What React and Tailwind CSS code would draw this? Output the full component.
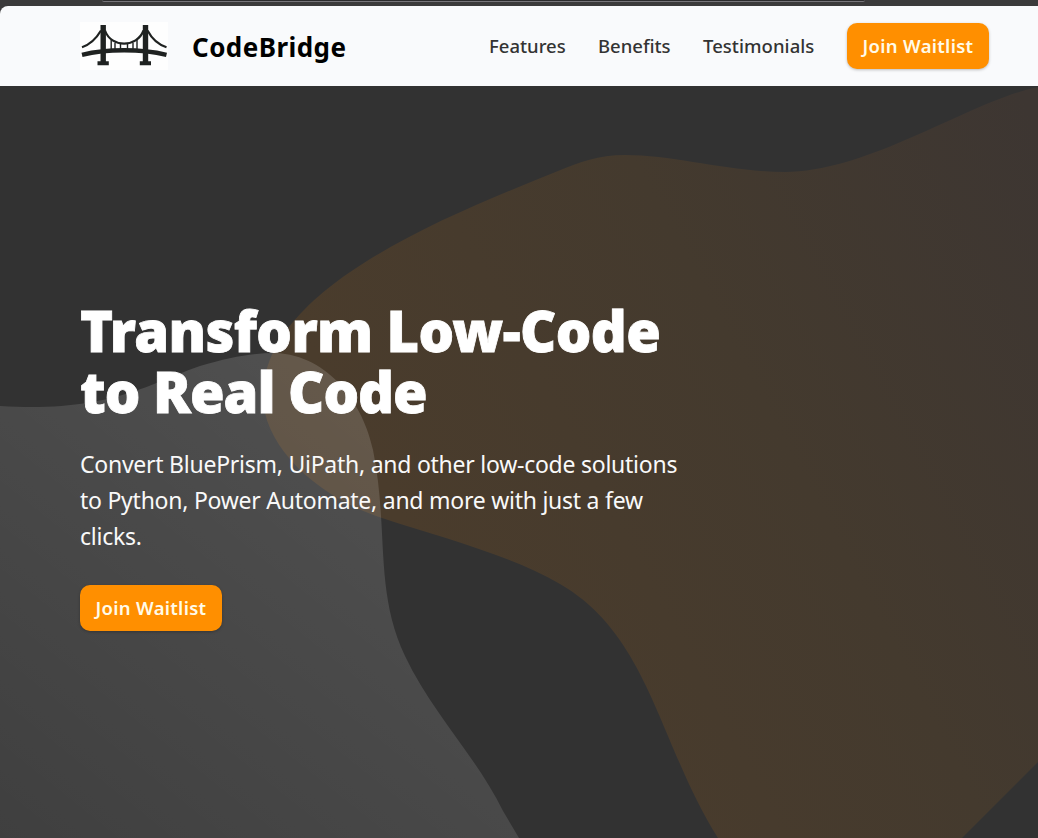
import React from "react";

function BridgeLogo() {
  return (
    <div className="h-12 w-[88px] bg-[#fefefe]">
      <svg viewBox="0 0 88 48" className="h-full w-full" fill="none" stroke="#1f2221">
        <path d="M2 32.800C27 26.800 61 26.800 86.500 32.800" strokeWidth="4.400" />
        <path d="M2 25.200C10 22.500 16 17 21 8.500M25 8.500C31 26 57 26 63.500 8.500M67.500 8.500C72 17 78 22.500 86.500 25.200" strokeWidth="2.200" />
        <path d="M31.200 18V27M35 21V27M40.500 22V27M47.500 22V27M53 21V27M57 18V27" strokeWidth="1.400" />
        <path d="M23.200 3V42M65.500 3V42" strokeWidth="5.400" />
        <path d="M17.500 41.300H28.800M59.800 41.300H71" strokeWidth="4" strokeLinejoin="round" />
      </svg>
    </div>
  );
}

function WaitlistButton() {
  return (
    <button className="flex h-[46px] w-[142px] shrink-0 items-center justify-center rounded-[10px] bg-[#ff8f00] shadow-[0_1px_3px_rgba(0,0,0,0.25)]">
      <span className="whitespace-nowrap pt-px text-[18.5px] font-semibold leading-none tracking-[0.3px] text-[#fffbe9]">
        Join Waitlist
      </span>
    </button>
  );
}

function Blobs() {
  return (
    <svg viewBox="0 86 1038 752" className="absolute inset-0 h-full w-full" preserveAspectRatio="none">
      <defs>
        <linearGradient id="amber" gradientUnits="userSpaceOnUse" x1="380" y1="480" x2="1040" y2="130">
          <stop offset="0" stopColor="#4a3c2c" />
          <stop offset="0.5" stopColor="#443a2e" />
          <stop offset="1" stopColor="#3d3632" />
        </linearGradient>
        <linearGradient id="smoke" gradientUnits="userSpaceOnUse" x1="350" y1="400" x2="0" y2="838">
          <stop offset="0" stopColor="#fff" stopOpacity="0.145" />
          <stop offset="1" stopColor="#fff" stopOpacity="0.065" />
        </linearGradient>
      </defs>
      <path
        fill="url(#amber)"
        d="M1038 87C970 101 870 172 785 172C730 172 675 155 625 155C598 155 580 162 558 171C450 215 263 287 263 396C263 445 315 496 382 518C443 538 510 555 560 584C650 636 659 745 718 838H962L1038 762Z"
      />
      <path
        fill="url(#smoke)"
        d="M0 406C110 413 150 383 200 366C230 357 252 353 275 353C330 355 364 406 373 450C389 530 374 590 405 656C432 713 476 756 503 811L519 838H0Z"
      />
    </svg>
  );
}

export default function App() {
  return (
    <div className="flex h-[838px] w-full flex-col overflow-hidden bg-[#323232] font-['Noto_Sans','Open_Sans',sans-serif]">
      <div className="h-[6px] shrink-0 bg-[#3b3a3b]">
        <div className="ml-[102px] h-[2px] w-[763px] rounded-b-[6px] border-b border-[#77757a] bg-[#2c2b2d]" />
      </div>
      <div className="shrink-0 bg-[#3b3a3b]">
        <header className="flex h-20 items-center justify-between rounded-tl-[8px] bg-[#f9fafc] pl-20 pr-[49px]">
          <div className="flex items-center gap-6">
            <BridgeLogo />
            <span className="pt-[2px] text-[26px] font-bold leading-none tracking-[0.45px] text-black">CodeBridge</span>
          </div>
          <div className="flex items-center">
            <nav className="mr-8 flex items-center gap-8 whitespace-nowrap pt-px text-[18.5px] font-medium leading-none text-[#333]">
              <a href="#features" className="w-[77px]">Features</a>
              <a href="#benefits" className="w-[73px]">Benefits</a>
              <a href="#testimonials" className="w-[112px] tracking-[0.05px]">Testimonials</a>
            </nav>
            <WaitlistButton />
          </div>
        </header>
      </div>
      <main className="relative flex-1">
        <Blobs />
        <section className="relative pl-20 pt-[214px]">
          <h1 className="whitespace-nowrap text-[56px] font-black leading-[61px] text-white [-webkit-text-stroke:0.8px_white]">
            <span className="block tracking-[-0.6px]">Transform Low-Code</span>
            <span className="block tracking-[-1px]">to Real Code</span>
          </h1>
          <p className="mt-6 whitespace-nowrap text-[23px] leading-9 tracking-[-0.25px] text-[#f9f9f9]">
            Convert BluePrism, UiPath, and other low-code solutions
            <br />
            to Python, Power Automate, and more with just a few
            <br />
            clicks.
          </p>
          <div className="mt-[31px]">
            <WaitlistButton />
          </div>
        </section>
      </main>
    </div>
  );
}
